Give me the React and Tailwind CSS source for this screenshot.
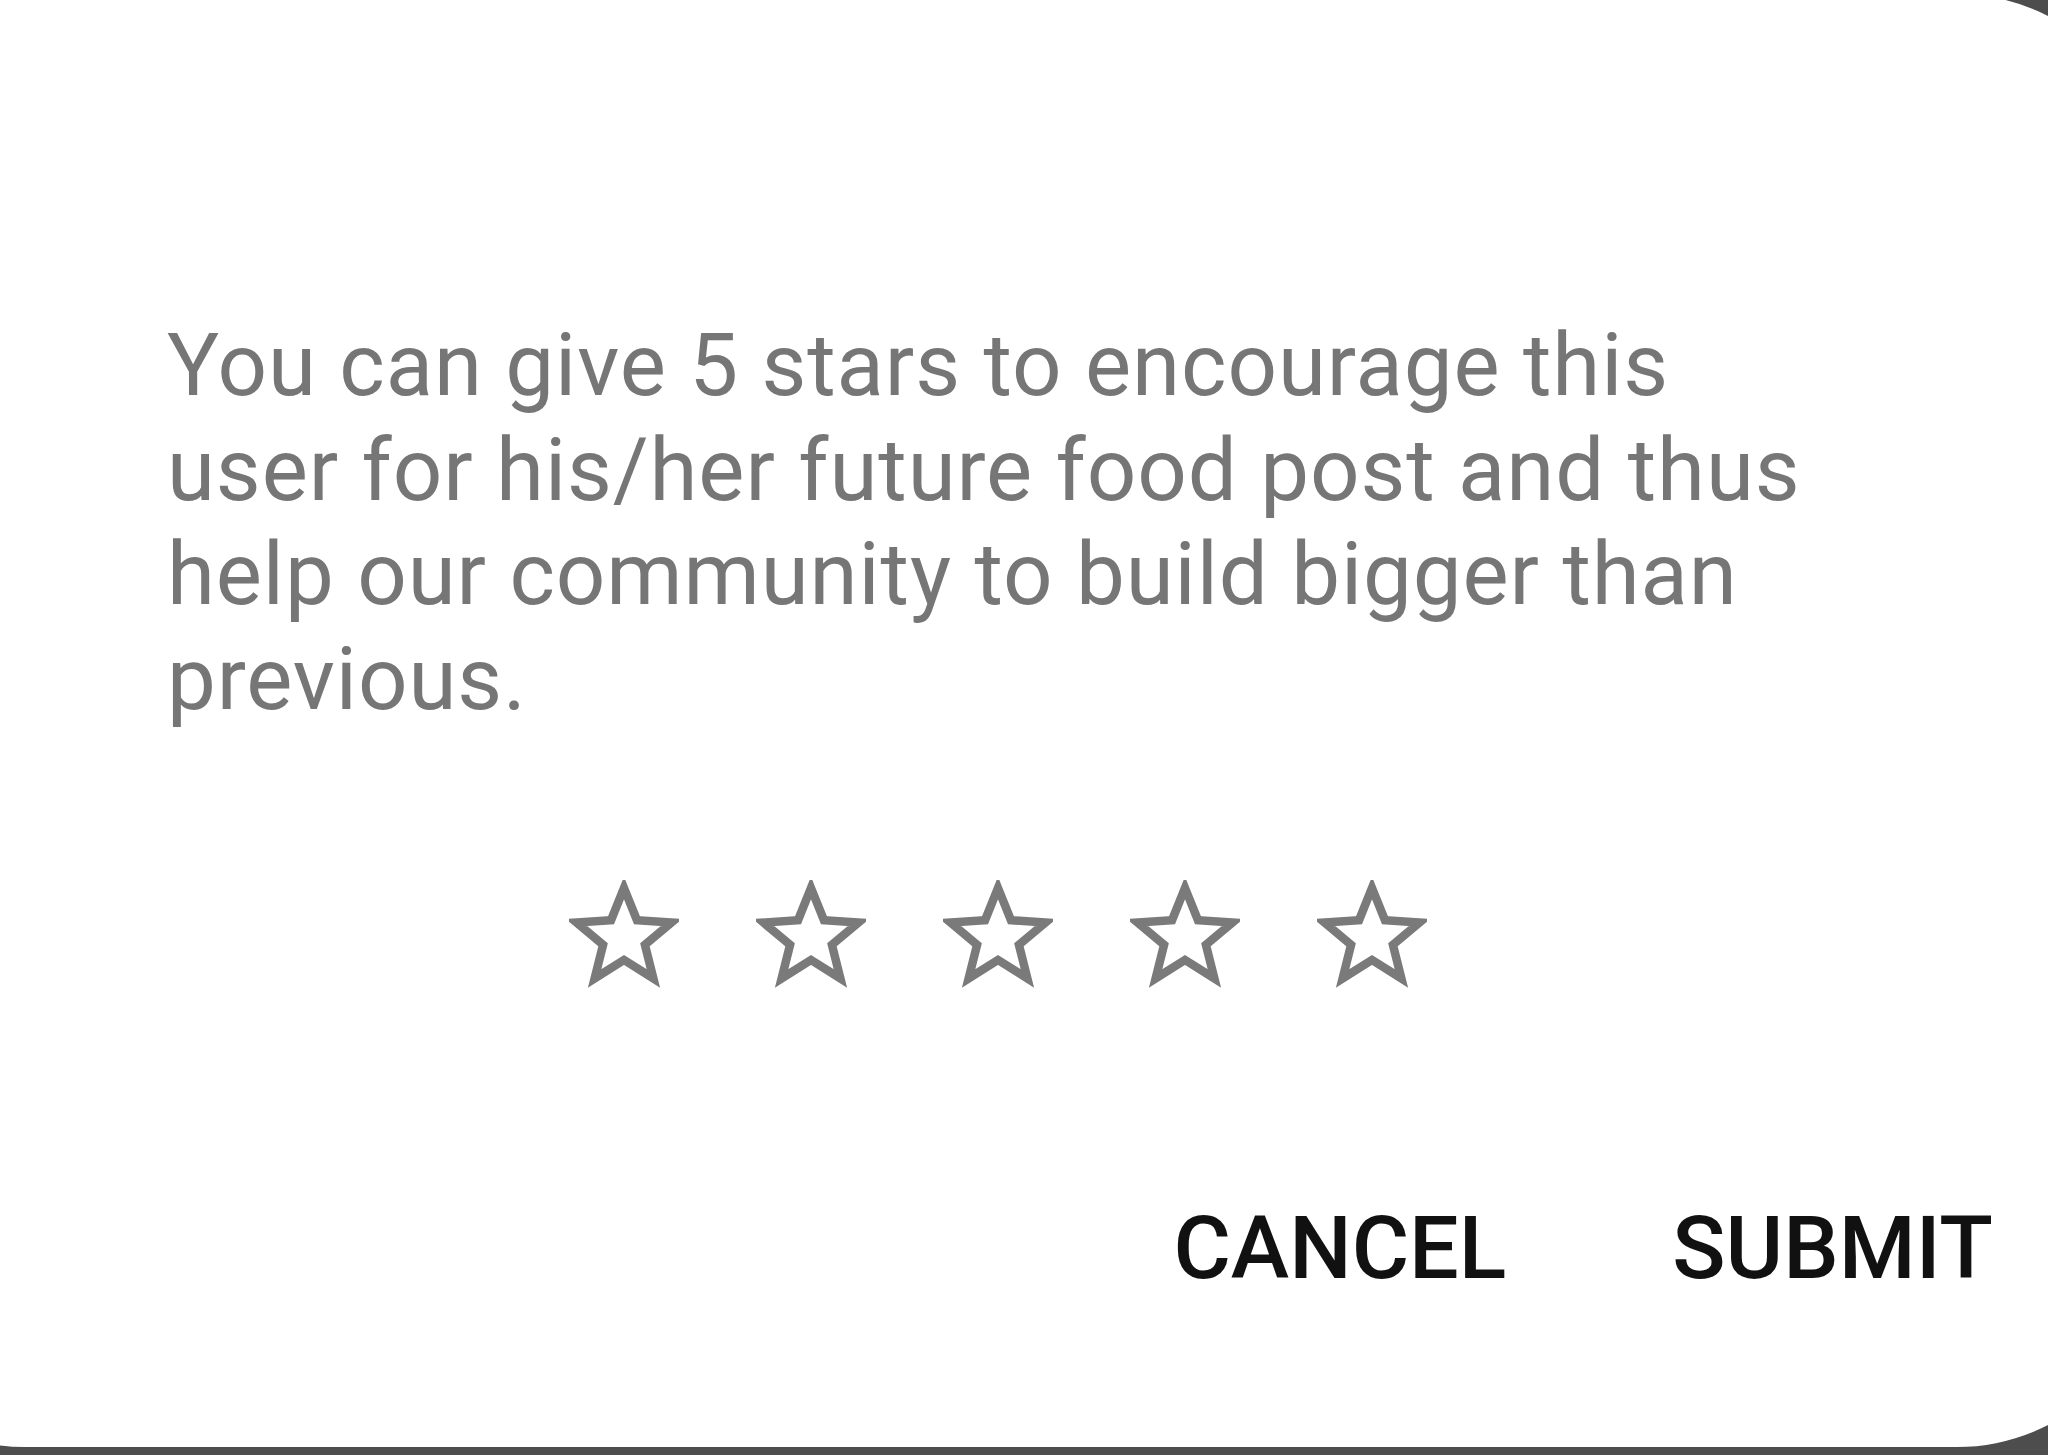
import React from 'react';

const lines = [
    'You can give 5 stars to encourage this',
    'user for his/her future food post and thus',
    'help our community to build bigger than',
    'previous.',
];

function StarOutline() {
    return (
        <svg width="110" height="110" viewBox="0 0 110 110" fill="none">
            <polygon
                points="55,8 67.93,40.2 102.55,42.55 75.92,64.8 84.39,98.45 55,80 25.61,98.45 34.08,64.8 7.45,42.55 42.07,40.2"
                stroke="#7a7a7a"
                strokeWidth="8.5"
                strokeLinejoin="miter"
            />
        </svg>
    );
}

export default function App() {
    return (
        <div className="w-[2048px] h-[1455px] overflow-hidden bg-[#4d4d4d]">
            <div
                className="-ml-[175px] -mt-[6px] w-[2332px] h-[1453px] rounded-[200px] bg-white flex flex-col"
                style={{ fontFamily: 'Roboto, "Noto Sans", sans-serif' }}
            >
                <div className="pl-[342px] pt-[319px] text-[87px] leading-[104.5px] tracking-[0.9px] text-[#767676]">
                    {lines.map((line) => (
                        <div key={line}>{line}</div>
                    ))}
                </div>

                <div className="flex justify-center gap-[77px] mt-[149px] pl-[14px]">
                    {[0, 1, 2, 3, 4].map((i) => (
                        <StarOutline key={i} />
                    ))}
                </div>

                <div className="flex justify-end gap-[166px] pr-[164px] mt-[214px] text-[88px] font-medium text-[#111111] leading-none">
                    <span>CANCEL</span>
                    <span>SUBMIT</span>
                </div>
            </div>
        </div>
    );
}
